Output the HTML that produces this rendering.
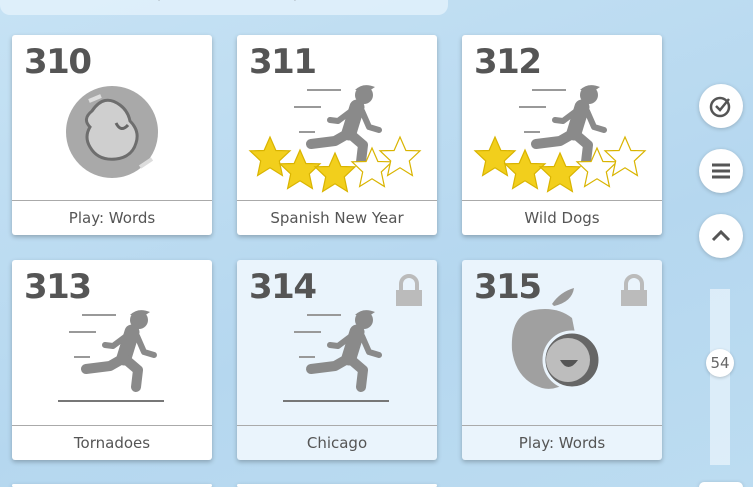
<!DOCTYPE html>
<html><head><style>
html,body{margin:0;width:753px;height:487px;overflow:hidden}
body{font-family:"DejaVu Sans","Liberation Sans",sans-serif}
#w{position:relative;width:753px;height:487px;overflow:hidden;background:linear-gradient(160deg,#c6e2f4,#b5d7ef 60%,#bcdcf1)}
.top{position:absolute;left:0;top:-20px;width:448px;height:35px;background:rgba(230,243,252,.75);border-radius:0 0 10px 10px;color:#666;font-size:18px;line-height:22px;padding-left:18px;box-sizing:border-box;white-space:nowrap}
.top b{color:#555}
.card{position:absolute;width:200px;height:200px;background:#fff;border-radius:3px;box-shadow:0 2px 5px rgba(0,0,0,.25)}
.card.l{background:#eaf4fc}
.num{position:absolute;left:12px;top:7px;font-size:34px;font-weight:bold;color:#555;letter-spacing:-1.5px}
.foot{position:absolute;left:0;right:0;bottom:0;height:34px;border-top:1px solid #aaa;text-align:center;line-height:34px;font-size:15px;color:#555}
.card svg{position:absolute;left:0;top:0}
.btn{position:absolute;left:699px;width:44px;height:44px;border-radius:50%;background:#fff;box-shadow:0 1px 4px rgba(0,0,0,.2)}
.track{position:absolute;left:710px;top:289px;width:20px;height:176px;background:rgba(235,245,252,.7)}
.knob{position:absolute;left:706px;top:349px;width:28px;height:28px;border-radius:50%;background:#fff;text-align:center;line-height:28px;font-size:15px;color:#666;box-shadow:0 1px 3px rgba(0,0,0,.2)}
</style></head><body><div id="w">
<div class="top"><b>44%</b> progress &nbsp;|&nbsp; <b>1,025</b> stars &nbsp;|&nbsp; <b>337,157</b> points</div>

<svg width="0" height="0" style="position:absolute"><defs>
<g id="run"><g stroke="#8a8a8a" fill="none" stroke-linecap="round" stroke-linejoin="round">
<path d="M120 72 L112 98" stroke-width="15"/>
<path d="M117 74 L101 86 L93 85" stroke-width="6"/>
<path d="M125 76 L132 92 L142 95" stroke-width="6"/>
<path d="M112 98 L98 106 L74 109" stroke-width="10"/>
<path d="M112 98 L126 110 L124 127" stroke-width="10"/>
</g><circle cx="127" cy="60" r="9" fill="#8a8a8a"/><path d="M118 55 q8-8 20-3 l-6 4z" fill="#8a8a8a"/>
<g stroke="#999" stroke-width="2"><line x1="70" y1="55" x2="104" y2="55"/><line x1="57" y1="72" x2="84" y2="72"/><line x1="62" y1="97" x2="78" y2="97"/></g></g>
<g id="star"><path d="M0,-20 L5.9,-6.5 20,-6.2 9.3,3.9 12.4,18.5 0,10.8 -12.4,18.5 -9.3,3.9 -20,-6.2 -5.9,-6.5Z" stroke="#d9b400" stroke-width="1.2"/></g>
</defs></svg>

<div class="card" style="left:12px;top:35px"><div class="num">310</div>
<svg width="200" height="200"><circle cx="100" cy="97" r="46" fill="#a9a9a9"/><path d="M80 76 q12-18 28-6 q8 6 10 16 q10 10 6 22 q-4 14 -20 16 q-18 2 -26-12 q-6-10 0-20 q-8-8 2-16z" fill="#cfcfcf" stroke="#6e6e6e" stroke-width="3"/><path d="M104 88 q5 10 12 2" stroke="#666" stroke-width="3" fill="none"/><path d="M77 66 l12-5" stroke="#ddd" stroke-width="4"/><path d="M128 132 l12-8" stroke="#ddd" stroke-width="4"/></svg>
<div class="foot">Play: Words</div></div>

<div class="card" style="left:237px;top:35px"><div class="num">311</div>
<svg width="200" height="200"><use href="#run"/>
<g fill="#f2cf1c"><use href="#star" transform="translate(33,122)"/><use href="#star" transform="translate(63,135)"/><use href="#star" transform="translate(98,138)"/></g>
<g fill="#fff"><use href="#star" transform="translate(135,133)"/><use href="#star" transform="translate(163,122)"/></g></svg>
<div class="foot">Spanish New Year</div></div>

<div class="card" style="left:462px;top:35px"><div class="num">312</div>
<svg width="200" height="200"><use href="#run"/>
<g fill="#f2cf1c"><use href="#star" transform="translate(33,122)"/><use href="#star" transform="translate(63,135)"/><use href="#star" transform="translate(98,138)"/></g>
<g fill="#fff"><use href="#star" transform="translate(135,133)"/><use href="#star" transform="translate(163,122)"/></g></svg>
<div class="foot">Wild Dogs</div></div>

<div class="card" style="left:12px;top:260px"><div class="num">313</div>
<svg width="200" height="200"><use href="#run"/><line x1="46" y1="141" x2="152" y2="141" stroke="#777" stroke-width="2"/></svg>
<div class="foot">Tornadoes</div></div>

<div class="card l" style="left:237px;top:260px"><div class="num">314</div>
<svg width="200" height="200"><use href="#run"/><line x1="46" y1="141" x2="152" y2="141" stroke="#777" stroke-width="2"/>
<path d="M164 30 v-6 a8 8 0 0 1 16 0 v6" stroke="#bbb" stroke-width="4" fill="none"/><rect x="159" y="30" width="26" height="16" fill="#bbb"/></svg>
<div class="foot">Chicago</div></div>

<div class="card l" style="left:462px;top:260px"><div class="num">315</div>
<svg width="200" height="200"><path d="M90 44 q8-12 22-16 q-2 14 -20 18z" fill="#999"/><path d="M72 50 q-24 5 -22 40 q4 30 30 38 q20 5 40-20 l-10-50 q-15-12 -38-8z" fill="#a0a0a0"/>
<circle cx="110" cy="100" r="28" fill="#666" stroke="#eaf4fc" stroke-width="3"/><circle cx="106" cy="100" r="22" fill="#bdbdbd"/><path d="M98 100 q8 14 18 0z" fill="#555"/>
<path d="M164 30 v-6 a8 8 0 0 1 16 0 v6" stroke="#bbb" stroke-width="4" fill="none"/><rect x="159" y="30" width="26" height="16" fill="#bbb"/></svg>
<div class="foot">Play: Words</div></div>

<div class="btn" style="top:84px"><svg width="44" height="44"><circle cx="21" cy="23" r="9" fill="none" stroke="#555" stroke-width="2.5"/><path d="M17 22 l4 4 l9-11" stroke="#555" stroke-width="2.5" fill="none"/></svg></div>
<div class="btn" style="top:149px"><svg width="44" height="44"><path d="M13 16h18M13 22h18M13 28h18" stroke="#555" stroke-width="3"/></svg></div>
<div class="btn" style="top:214px"><svg width="44" height="44"><path d="M14 26 l8-8 l8 8" stroke="#555" stroke-width="3" fill="none"/></svg></div>
<div class="track"></div>
<div class="knob">54</div>
<div class="btn" style="top:482px;height:5px;border-radius:22px 22px 0 0"></div>
<div class="card" style="left:12px;top:484px;height:3px"></div>
<div class="card" style="left:237px;top:484px;height:3px"></div>
</div></body></html>
